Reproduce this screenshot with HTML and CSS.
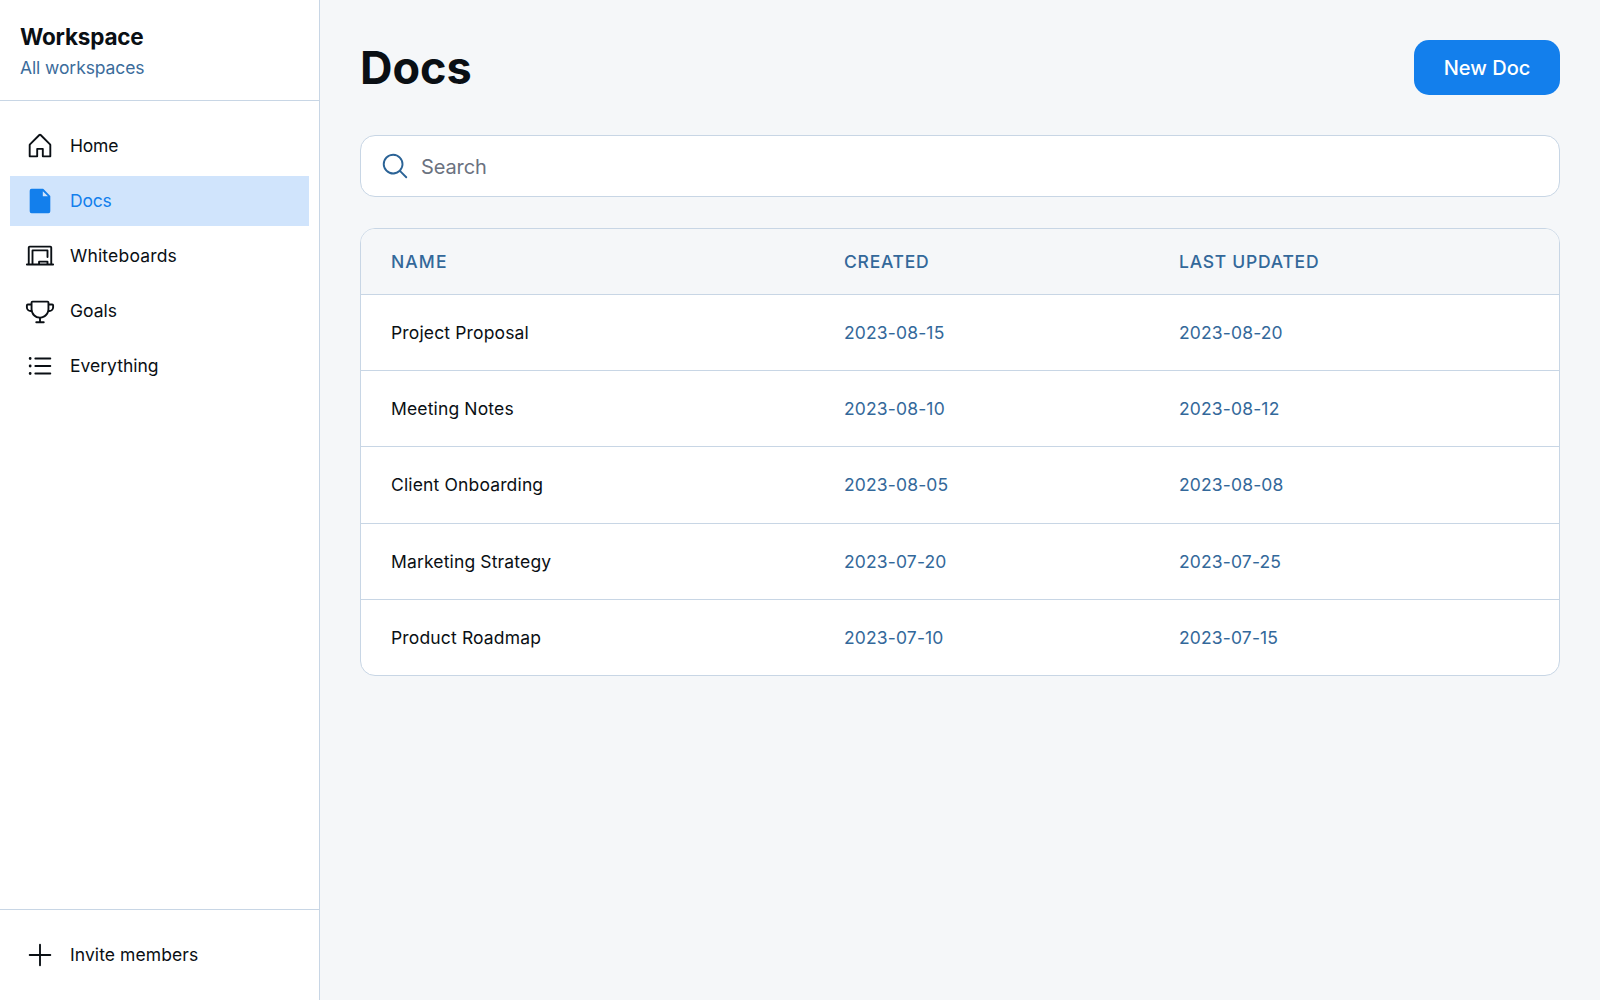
FILE: index.html
```html
<!DOCTYPE html>
<html lang="en">
<head>
<meta charset="utf-8">
<title>Docs</title>
<link rel="stylesheet" href="styles.css">
</head>
<body>
<div class="app">
  <aside class="sidebar">
    <header class="sidebar-header">
      <h2 class="workspace-name">Workspace</h2>
      <p class="workspace-sub">All workspaces</p>
    </header>
    <nav class="nav">
      <a class="nav-item">
        <svg class="icon" viewBox="0 0 256 256"><path d="M219.31,108.68l-80-80a16,16,0,0,0-22.62,0l-80,80A15.87,15.87,0,0,0,32,120v96a8,8,0,0,0,8,8h64a8,8,0,0,0,8-8V160h32v56a8,8,0,0,0,8,8h64a8,8,0,0,0,8-8V120A15.87,15.87,0,0,0,219.31,108.68ZM208,208H160V152a8,8,0,0,0-8-8H104a8,8,0,0,0-8,8v56H48V120l80-80,80,80Z"/></svg>
        <span class="label tight">Home</span>
      </a>
      <a class="nav-item active">
        <svg class="icon" viewBox="0 0 256 256"><path d="M213.66,82.34l-56-56A8,8,0,0,0,152,24H56A16,16,0,0,0,40,40V216a16,16,0,0,0,16,16H200a16,16,0,0,0,16-16V88A8,8,0,0,0,213.66,82.34ZM152,88V44l44,44Z"/></svg>
        <span class="label tight">Docs</span>
      </a>
      <a class="nav-item">
        <svg class="icon" viewBox="0 0 256 256"><path d="M240,192h-8V56a16,16,0,0,0-16-16H40A16,16,0,0,0,24,56V192H16a8,8,0,0,0,0,16H240a8,8,0,0,0,0-16ZM40,56H216V192H200V176a8,8,0,0,0-8-8H120a8,8,0,0,0-8,8v16H72V88H184v48a8,8,0,0,0,16,0V80a8,8,0,0,0-8-8H64a8,8,0,0,0-8,8V192H40ZM184,192H128v-8h56Z"/></svg>
        <span class="label wide">Whiteboards</span>
      </a>
      <a class="nav-item">
        <svg class="icon" viewBox="0 0 256 256"><path d="M232,64H208V56a16,16,0,0,0-16-16H64A16,16,0,0,0,48,56v8H24A16,16,0,0,0,8,80V96a40,40,0,0,0,40,40h3.65A80.13,80.13,0,0,0,120,191.61V216H96a8,8,0,0,0,0,16h64a8,8,0,0,0,0-16H136V191.58c31.94-3.23,58.44-25.64,68.08-55.58H208a40,40,0,0,0,40-40V80A16,16,0,0,0,232,64ZM48,120A24,24,0,0,1,24,96V80H48v32q0,4,.39,8Zm144-8.9c0,35.52-28.49,64.64-63.51,64.9H128a64,64,0,0,1-64-64V56H192ZM232,96a24,24,0,0,1-24,24h-.5a81.81,81.81,0,0,0,.5-8.9V80h24Z"/></svg>
        <span class="label">Goals</span>
      </a>
      <a class="nav-item">
        <svg class="icon" viewBox="0 0 256 256"><path d="M80,64a8,8,0,0,1,8-8H216a8,8,0,0,1,0,16H88A8,8,0,0,1,80,64Zm136,56H88a8,8,0,0,0,0,16H216a8,8,0,0,0,0-16Zm0,64H88a8,8,0,0,0,0,16H216a8,8,0,0,0,0-16ZM44,52A12,12,0,1,0,56,64,12,12,0,0,0,44,52Zm0,64a12,12,0,1,0,12,12A12,12,0,0,0,44,116Zm0,64a12,12,0,1,0,12,12A12,12,0,0,0,44,180Z"/></svg>
        <span class="label">Everything</span>
      </a>
    </nav>
    <footer class="sidebar-footer">
      <a class="nav-item">
        <svg class="icon" viewBox="0 0 256 256"><path d="M224,128a8,8,0,0,1-8,8H136v80a8,8,0,0,1-16,0V136H40a8,8,0,0,1,0-16h80V40a8,8,0,0,1,16,0v80h80A8,8,0,0,1,224,128Z"/></svg>
        <span class="label invite">Invite members</span>
      </a>
    </footer>
  </aside>
  <main class="main">
    <div class="page-header">
      <h1 class="page-title">Docs</h1>
      <button class="new-doc">New Doc</button>
    </div>
    <label class="search">
      <svg class="icon" viewBox="0 0 256 256"><path d="M229.66,218.34l-50.07-50.06a88.11,88.11,0,1,0-11.31,11.31l50.06,50.07a8,8,0,0,0,11.32-11.32ZM40,112a72,72,0,1,1,72,72A72.08,72.08,0,0,1,40,112Z"/></svg>
      <input class="search-input" type="text" placeholder="Search">
    </label>
    <div class="table-card">
      <table class="docs-table">
        <colgroup><col class="col-name"><col class="col-created"><col></colgroup>
        <thead>
          <tr><th>NAME</th><th>CREATED</th><th>LAST UPDATED</th></tr>
        </thead>
        <tbody>
          <tr><td>Project Proposal</td><td>2023-08-15</td><td>2023-08-20</td></tr>
          <tr><td>Meeting Notes</td><td>2023-08-10</td><td>2023-08-12</td></tr>
          <tr><td>Client Onboarding</td><td>2023-08-05</td><td>2023-08-08</td></tr>
          <tr><td>Marketing Strategy</td><td>2023-07-20</td><td>2023-07-25</td></tr>
          <tr><td>Product Roadmap</td><td>2023-07-10</td><td>2023-07-15</td></tr>
        </tbody>
      </table>
    </div>
  </main>
</div>
</body>
</html>
```
FILE: styles.css
```css
* { box-sizing: border-box; margin: 0; padding: 0; }

body {
  font-family: Inter, "Noto Sans", sans-serif;
  font-size: 17.5px;
  line-height: 25px;
  color: #0a0f14;
  background: #f5f7f9;
}

.app { display: flex; height: 100vh; }

.sidebar {
  display: flex;
  flex-direction: column;
  flex: 0 0 320px;
  background: #fff;
  border-right: 1px solid #c8d6e5;
}

.sidebar-header { padding: 19px 20px 20px; border-bottom: 1px solid #c8d6e5; }
.workspace-name {
  margin-bottom: 1px;
  font-size: 22.5px;
  line-height: 35px;
  font-weight: 700;
  letter-spacing: -0.2px;
}
.workspace-sub { color: #3b6c9b; letter-spacing: -0.1px; }

.nav {
  display: flex;
  flex-direction: column;
  flex: 1;
  gap: 5px;
  padding: 20px 10px;
}

.nav-item {
  display: flex;
  align-items: center;
  gap: 15px;
  height: 50px;
  padding: 0 15px;
}

.nav-item.active { background: #d0e4fc; color: #137fec; }

.label { padding-bottom: 1px; }
.label.tight { letter-spacing: -0.2px; }
.label.wide { letter-spacing: 0.18px; }
.label.invite { letter-spacing: 0.08px; }

.icon { width: 30px; height: 30px; flex: none; fill: currentColor; }

.sidebar-footer { padding: 20px 10px; border-top: 1px solid #c8d6e5; }

.main { flex: 1; padding: 40px; }

.page-header {
  display: flex;
  align-items: center;
  justify-content: space-between;
  margin-bottom: 40px;
}

.page-title { font-size: 45px; line-height: 50px; font-weight: 700; }

.new-doc {
  width: 146px;
  height: 55px;
  border: 0;
  border-radius: 15px;
  background: #137fec;
  color: #fff;
  font: 500 20px/30px Inter, sans-serif;
}

.search {
  display: flex;
  align-items: center;
  gap: 11px;
  height: 62px;
  padding: 0 19px;
  margin-bottom: 31px;
  border: 1px solid #c8d6e5;
  border-radius: 15px;
  background: #fff;
  color: #2b6396;
}

.search-input {
  flex: 1;
  padding-top: 2px;
  border: 0;
  outline: 0;
  background: none;
  font: 400 20px/30px Inter, sans-serif;
  letter-spacing: -0.1px;
}

.search-input::placeholder { color: #6b7280; }

.table-card {
  overflow: hidden;
  border: 1px solid #c8d6e5;
  border-radius: 15px;
  background: #fff;
}

.docs-table {
  width: 100%;
  table-layout: fixed;
  border-collapse: separate;
  border-spacing: 0;
  text-align: left;
}

.col-name { width: 453px; }
.col-created { width: 335px; }

.docs-table th {
  height: 66px;
  padding: 0 30px;
  background: #f5f7f9;
  border-bottom: 1px solid #c8d6e5;
  color: #33689a;
  font-weight: 500;
  letter-spacing: 0.75px;
}

.docs-table th:first-child { letter-spacing: 1.1px; }

.docs-table td {
  height: 76px;
  padding: 0 30px;
  border-bottom: 1px solid #c8d6e5;
  color: #33689a;
  letter-spacing: 0.15px;
}

.docs-table td:first-child { color: #0a0f14; }
.docs-table tbody tr:nth-child(3) td { height: 77px; padding-bottom: 1px; }
.docs-table tbody tr:last-child td { height: 75px; border-bottom: 0; }
```
